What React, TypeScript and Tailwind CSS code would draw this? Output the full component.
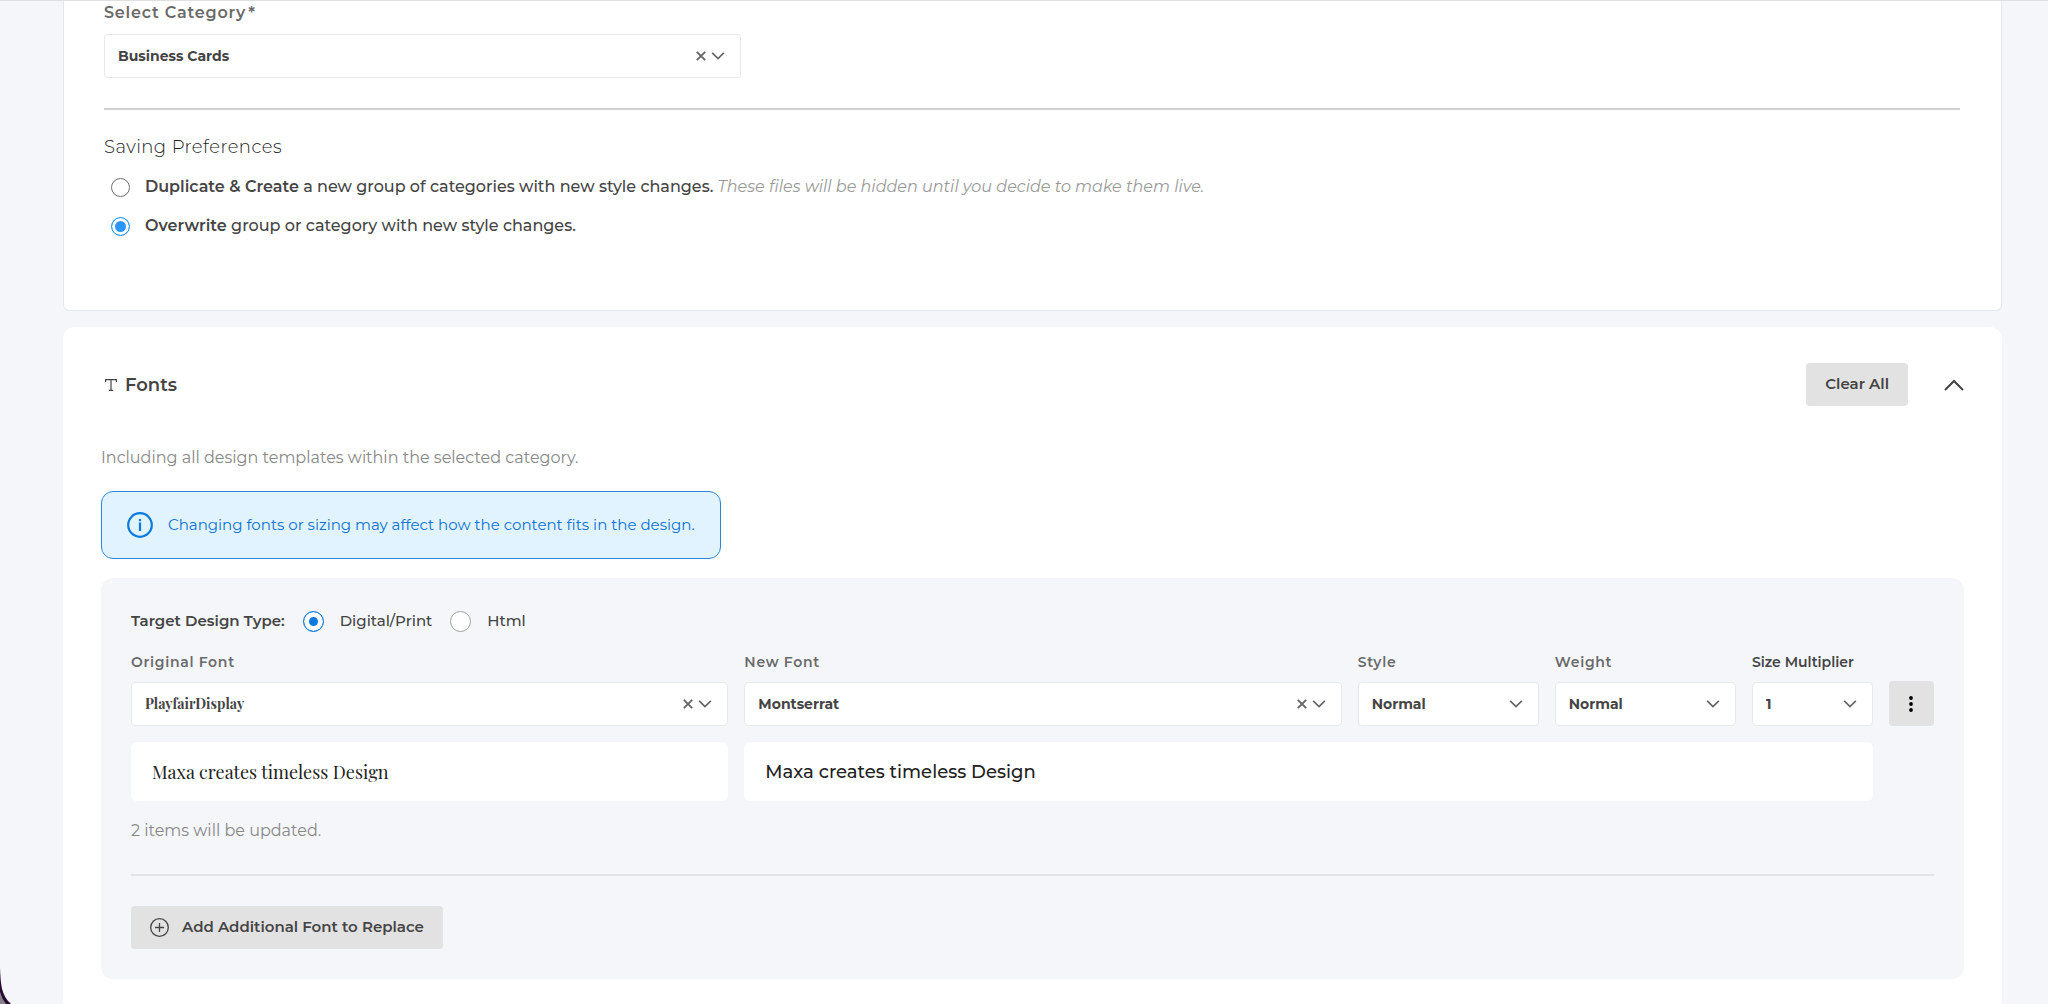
import { useState } from 'react';
import type { ReactNode } from 'react';

const sampleText = 'Maxa creates timeless Design';

function ChevronIcon() {
  return (
    <svg className="w-3.5 h-3.5 shrink-0 pointer-events-none" viewBox="0 0 14 14" fill="none" stroke="#666666" strokeWidth="1.7">
      <path d="M1.2 3.8l5.8 5.8 5.8-5.8" />
    </svg>
  );
}

function ClearIcon() {
  return (
    <svg className="w-2.5 h-2.5" viewBox="0 0 10 10" fill="none" stroke="#666666" strokeWidth="1.9">
      <path d="M0.8 0.8l8.4 8.4M9.2 0.8l-8.4 8.4" />
    </svg>
  );
}

type SelectBoxProps = {
  id: string;
  options: string[];
  clearable?: boolean;
  className?: string;
};

function SelectBox({ id, options, clearable, className = '' }: SelectBoxProps) {
  const [value, setValue] = useState(options[0]);

  return (
    <div className="h-11 flex items-center gap-[5px] pl-[13px] pr-[15px] bg-white border border-[#e8e9eb] rounded">
      <select
        id={id}
        value={value}
        onChange={(e) => setValue(e.target.value)}
        className={`min-w-0 flex-1 appearance-none bg-transparent text-sm font-bold text-[#444444] focus:outline-none ${className}`}
      >
        <option value="" hidden></option>
        {options.map(option => (
          <option key={option} value={option}>{option}</option>
        ))}
      </select>
      {clearable && (
        <button type="button" aria-label="Clear" onClick={() => setValue('')}>
          <ClearIcon />
        </button>
      )}
      <ChevronIcon />
    </div>
  );
}

function Field({ id, label, children }: { id: string; label: string; children: ReactNode }) {
  return (
    <div className="min-w-0">
      <label htmlFor={id} className="block mb-2.5 text-sm leading-5 font-semibold tracking-wider text-[#6a6a6a]">
        {label}
      </label>
      {children}
    </div>
  );
}

export default function App() {
  const [saving, setSaving] = useState('overwrite');
  const [designType, setDesignType] = useState('print');

  const savingRadio =
    "appearance-none w-[19px] h-[19px] shrink-0 rounded-full border border-[#6f6f6f] bg-white checked:border-[#2a97ff] checked:bg-[#2a97ff] checked:shadow-[inset_0_0_0_3px_white]";
  const typeRadio =
    "appearance-none w-[21px] h-[21px] shrink-0 rounded-full border border-[#a0a0a0] bg-white checked:border-[#0a7ae0] checked:bg-[#0a7ae0] checked:shadow-[inset_0_0_0_5px_white]";

  return (
    <div className="min-h-screen pl-[63px] pr-[46px] bg-[#f4f6fa] border-t border-[#dedfe2] font-['Montserrat','Inter',sans-serif] text-[#444444] overflow-hidden">
      {/* Category and saving preferences */}
      <section className="pt-0.5 pl-10 pr-[41px] pb-[72px] bg-white border border-t-0 border-[#e6e8ea] rounded-b-md">
        <label htmlFor="category" className="block mb-[11px] text-base leading-5 font-semibold tracking-wider text-[#6a6a6a]">
          Select Category<span className="ml-0.5">*</span>
        </label>
        <div className="w-[637px] max-w-full">
          <SelectBox id="category" options={['Business Cards']} clearable />
        </div>

        <hr className="mt-[30px] mb-[25px] border-t-2 border-[#d0d0d0]" />

        <fieldset>
          <legend className="text-lg leading-6 font-light tracking-wide text-[#222222]">Saving Preferences</legend>
          <label className="mt-4 pl-[7px] flex items-center gap-[15px] text-base leading-6">
            <input
              type="radio"
              name="saving"
              className={savingRadio}
              checked={saving === 'duplicate'}
              onChange={() => setSaving('duplicate')}
            />
            <span className="font-medium">
              <b className="font-semibold">Duplicate &amp; Create</b> a new group of categories with new style changes.{' '}
              <i className="font-normal text-[#999999]">These files will be hidden until you decide to make them live.</i>
            </span>
          </label>
          <label className="mt-[15px] pl-[7px] flex items-center gap-[15px] text-base leading-6">
            <input
              type="radio"
              name="saving"
              className={savingRadio}
              checked={saving === 'overwrite'}
              onChange={() => setSaving('overwrite')}
            />
            <span className="font-medium">
              <b className="font-semibold">Overwrite</b> group or category with new style changes.
            </span>
          </label>
        </fieldset>
      </section>

      {/* Fonts */}
      <section className="mt-4 pt-9 px-[38px] pb-[26px] bg-white rounded-t-xl">
        <div className="flex items-center">
          <svg className="w-3 h-3 ml-1 mr-2" viewBox="0 0 12 12" fill="none" stroke="#444444" strokeWidth="1.2">
            <path d="M0.6 3V0.6h10.8V3M6 0.6v10.8M3.8 11.4h4.4" />
          </svg>
          <h2 className="text-lg font-semibold">Fonts</h2>
          <button type="button" className="ml-auto h-[43px] px-[19px] rounded bg-[#e2e2e2] text-[15px] font-semibold">
            Clear All
          </button>
          <button type="button" aria-label="Collapse" className="ml-9">
            <svg className="w-5 h-3" viewBox="0 0 20 12" fill="none" stroke="#444444" strokeWidth="2">
              <path d="M1 11l9-9 9 9" />
            </svg>
          </button>
        </div>

        <p className="mt-10 text-base leading-6 text-[#888888]">
          Including all design templates within the selected category.
        </p>

        <div className="mt-[21px] w-fit h-[68px] px-[25px] flex items-center gap-[15px] rounded-xl border border-[#2a86dc] bg-[#e1f3ff] text-[15px] text-[#0a72d4]">
          <svg className="w-[26px] h-[26px] shrink-0" viewBox="0 0 26 26" fill="none" stroke="#0a7ae0" strokeWidth="2.2">
            <circle cx="13" cy="13" r="11.8" />
            <path d="M13 10.5v8.5M13 7v2.2" />
          </svg>
          Changing fonts or sizing may affect how the content fits in the design.
        </div>

        <div className="mt-[19px] p-[30px] bg-[#f4f6fa] rounded-xl">
          <fieldset className="flex items-center text-[15px] leading-[26px] font-medium">
            <legend className="float-left mr-[18px] font-semibold">Target Design Type:</legend>
            <label className="flex items-center gap-4 mr-[18px]">
              <input
                type="radio"
                name="designType"
                className={typeRadio}
                checked={designType === 'print'}
                onChange={() => setDesignType('print')}
              />
              Digital/Print
            </label>
            <label className="flex items-center gap-4">
              <input
                type="radio"
                name="designType"
                className={typeRadio}
                checked={designType === 'html'}
                onChange={() => setDesignType('html')}
              />
              Html
            </label>
          </fieldset>

          <div className="mt-[18px] grid grid-cols-[597fr_597fr_181fr_181fr_121fr_45px] gap-4 items-end">
            <Field id="originalFont" label="Original Font">
              <SelectBox id="originalFont" options={['PlayfairDisplay']} clearable className="font-['Playfair_Display','Liberation_Serif',serif]" />
            </Field>
            <Field id="newFont" label="New Font">
              <SelectBox id="newFont" options={['Montserrat']} clearable />
            </Field>
            <Field id="style" label="Style">
              <SelectBox id="style" options={['Normal', 'Italic']} />
            </Field>
            <Field id="weight" label="Weight">
              <SelectBox id="weight" options={['Normal', 'Bold']} />
            </Field>
            <div className="min-w-0">
              <label htmlFor="size" className="block mb-2.5 text-sm leading-5 font-semibold whitespace-nowrap">
                Size Multiplier
              </label>
              <SelectBox id="size" options={['1', '2', '3']} />
            </div>
            <button type="button" aria-label="More" className="h-[45px] flex items-center justify-center rounded bg-[#e2e2e2]">
              <svg className="w-4 h-4" viewBox="0 0 16 16" fill="black">
                <circle cx="8" cy="2" r="1.9" />
                <circle cx="8" cy="8" r="1.9" />
                <circle cx="8" cy="14" r="1.9" />
              </svg>
            </button>

            <div className="h-[59px] px-[21px] flex items-center bg-white rounded-md text-lg text-[#222222] font-['Playfair_Display','Liberation_Serif',serif]">
              {sampleText}
            </div>
            <div className="col-span-4 h-[59px] px-[21px] flex items-center bg-white rounded-md text-lg font-medium text-[#222222]">
              {sampleText}
            </div>
          </div>

          <p className="mt-[18px] text-base leading-6 text-[#888888]">2 items will be updated.</p>
          <hr className="mt-[31px] mb-[30px] border-t-2 border-[#e4e4e6]" />

          <button type="button" className="h-[43px] px-[19px] flex items-center gap-[13px] rounded bg-[#e2e2e2] text-[15px] font-semibold">
            <svg className="w-[19px] h-[19px]" viewBox="0 0 19 19" fill="none" stroke="#444444" strokeWidth="1.3">
              <circle cx="9.5" cy="9.5" r="8.8" />
              <path d="M9.5 5v9M5 9.5h9" />
            </svg>
            Add Additional Font to Replace
          </button>
        </div>
      </section>

      {/* Dark window corner */}
      <svg className="fixed left-0 bottom-0 w-3 h-9" viewBox="0 0 12 36">
        <path d="M0 0C0.8 16 1 27 11 36H0z" fill="#2b0a33" />
        <path d="M0 24Q2 31 6 36H0z" fill="#85828a" />
      </svg>
    </div>
  );
}
